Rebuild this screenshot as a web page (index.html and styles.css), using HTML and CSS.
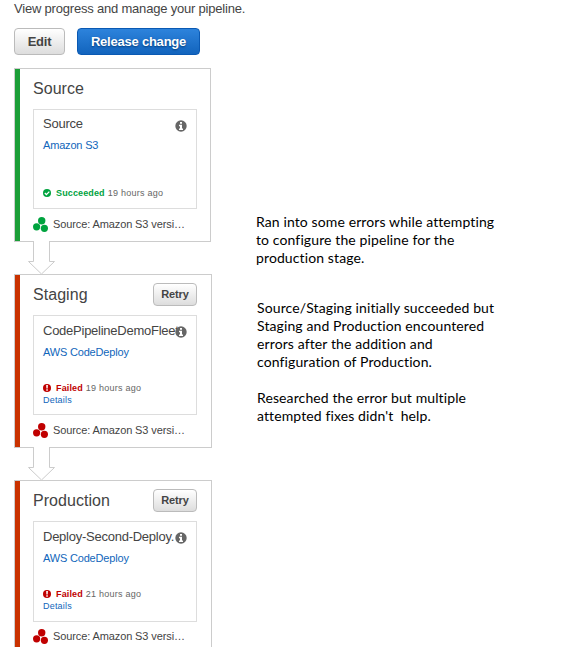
FILE: index.html
```html
<!DOCTYPE html>
<html lang="en">
<head>
<meta charset="utf-8">
<title>Pipeline</title>
<link rel="stylesheet" href="styles.css">
</head>
<body>
<svg class="defs" width="0" height="0">
  <symbol id="info" viewBox="0 0 12 12"><circle cx="6" cy="6" r="5.7" fill="#666"/><path d="M5 2h2v1.7H5zM4 4.8h3v3.7h1V10H4V8.5h1V6.2H4z" fill="#fff"/></symbol>
  <symbol id="ok" viewBox="0 0 8 8"><circle cx="4" cy="4" r="4" fill="#00a33f"/><path d="M1.8 4l1.6 1.6 2.9-3" fill="none" stroke="#fff" stroke-width="1.3"/></symbol>
  <symbol id="fail" viewBox="0 0 8 8"><circle cx="4" cy="4" r="4" fill="#c00000"/><path d="M3.2 1.1h1.7l-.2 3.4H3.4zM3.3 5.2h1.5v1.5H3.3z" fill="#fff"/></symbol>
  <symbol id="dots" viewBox="0 0 15 15"><circle cx="8.7" cy="3.7" r="3.7"/><circle cx="3.6" cy="9.8" r="3.6"/><circle cx="11.4" cy="11.3" r="3.6"/></symbol>
  <symbol id="arrow" viewBox="0 0 28 34"><path d="M5.5 0V20.5H.5L13.5 33 26.5 20.5H21.5V0" fill="#fff" stroke="#ccc"/></symbol>
</svg>
<main class="page">
  <section class="pipeline">
    <p class="intro">View progress and manage your pipeline.</p>
    <div class="actions">
      <button class="btn edit">Edit</button>
      <button class="btn primary">Release change</button>
    </div>
    <article class="stage source">
      <header class="stage-head"><h2>Source</h2></header>
      <div class="action">
        <h3>Source</h3><svg class="info"><use href="#info"/></svg>
        <a class="provider">Amazon S3</a>
        <div class="status"><svg class="state"><use href="#ok"/></svg><b class="succeeded">Succeeded</b><span>19 hours ago</span></div>
      </div>
      <div class="revision green"><svg class="dots"><use href="#dots"/></svg><span>Source: Amazon S3 versi…</span></div>
    </article>
    <svg class="arrow"><use href="#arrow"/></svg>
    <article class="stage failed">
      <header class="stage-head"><h2>Staging</h2><button class="btn retry">Retry</button></header>
      <div class="action">
        <h3>CodePipelineDemoFleet</h3><svg class="info"><use href="#info"/></svg>
        <a class="provider">AWS CodeDeploy</a>
        <div class="status"><svg class="state"><use href="#fail"/></svg><b class="error">Failed</b><span>19 hours ago</span></div>
        <a class="details">Details</a>
      </div>
      <div class="revision red"><svg class="dots"><use href="#dots"/></svg><span>Source: Amazon S3 versi…</span></div>
    </article>
    <svg class="arrow"><use href="#arrow"/></svg>
    <article class="stage failed last">
      <header class="stage-head"><h2>Production</h2><button class="btn retry">Retry</button></header>
      <div class="action">
        <h3>Deploy-Second-Deploy.</h3><svg class="info"><use href="#info"/></svg>
        <a class="provider">AWS CodeDeploy</a>
        <div class="status"><svg class="state"><use href="#fail"/></svg><b class="error">Failed</b><span>21 hours ago</span></div>
        <a class="details">Details</a>
      </div>
      <div class="revision red"><svg class="dots"><use href="#dots"/></svg><span>Source: Amazon S3 versi…</span></div>
    </article>
  </section>
  <aside class="notes">
    <p class="first">Ran into some errors while attempting<br>to configure the pipeline for the<br>production stage.</p>
    <p>Source/Staging initially succeeded but<br>Staging and Production encountered<br>errors after the addition and<br>configuration of Production.</p>
    <p>Researched the error but multiple<br>attempted fixes didn't&nbsp; help.</p>
  </aside>
</main>
</body>
</html>
```

FILE: styles.css
```css
* { box-sizing: border-box; }
body { margin: 0; background: #fff; color: #444; font: 13px/18px "Liberation Sans", Arial, sans-serif; }
h2, h3, p { margin: 0; font-weight: normal; }
svg { display: block; flex: none; }
.defs { position: absolute; }
.page { display: flex; height: 647px; overflow: hidden; }
.pipeline { width: 256px; padding-left: 14px; flex: none; }
.intro { height: 28px; white-space: nowrap; letter-spacing: -.2px; }
.actions { display: flex; gap: 12px; height: 40px; }
.btn { height: 27px; padding: 0; border: 1px solid #bbb; border-radius: 4px; background: linear-gradient(#fff, #ddd); color: #444; font: bold 13px/24px "Liberation Sans", Arial, sans-serif; letter-spacing: -.22px; white-space: nowrap; }
.edit { width: 51px; }
.primary { width: 123px; color: #fff; border-color: #0a59b3; background: linear-gradient(#2d83dc, #1264bd); text-shadow: 0 1px 2px #003b78; }
.retry { width: 44px; height: 23px; font-size: 11px; line-height: 20px; letter-spacing: -.1px; }
.stage { width: 198px; height: 174px; padding: 0 14px 0 18px; border: 1px solid #ccc; background: linear-gradient(#c93200, #c93200) left / 5px 100% no-repeat; }
.source { width: 197px; background-image: linear-gradient(#1b9e37, #1b9e37); padding-right: 13px; }
.stage-head { height: 40px; display: flex; align-items: center; justify-content: space-between; padding-bottom: 2px; }
.stage-head h2 { padding-top: 2px; font-size: 16px; line-height: 20px; letter-spacing: .05px; }
.action { position: relative; height: 100px; width: 164px; padding: 5px 9px; border: 1px solid #ddd; }
.failed .action { padding-top: 6px; }
.action h3 { font-size: 13px; line-height: 18px; letter-spacing: -.25px; white-space: nowrap; }
.info { position: absolute; right: 9.5px; top: 10px; width: 12px; height: 12px; }
.provider { display: block; margin-top: 4px; font-size: 11px; line-height: 16px; letter-spacing: -.18px; color: #1166bb; }
.status { display: flex; align-items: center; height: 12px; margin-top: 22px; font-size: 9px; line-height: 12px; letter-spacing: .25px; color: #666; white-space: nowrap; }
.source .status { margin-top: 34px; }
.state { width: 8px; height: 8px; margin-right: 5px; }
.status b { margin-right: 3px; letter-spacing: .13px; }
.succeeded { color: #00a33f; }
.error { color: #c00000; }
.details { display: block; color: #1166bb; font-size: 9px; line-height: 12px; letter-spacing: .2px; }
.revision { display: flex; align-items: center; height: 30px; font-size: 11px; letter-spacing: -.11px; white-space: nowrap; }
.dots { width: 15px; height: 15px; margin-right: 5px; }
.green { fill: #00a33f; }
.red { fill: #c00000; }
.arrow { position: relative; width: 28px; height: 34px; margin: -1px 0 -1px 14px; }
.last { height: 175px; }
.last .action { height: 101px; }
.last .revision { height: 28px; }
.notes { padding-top: 213px; color: #000; font: 14px/18px Lato, Carlito, sans-serif; letter-spacing: .11px; white-space: nowrap; }
.notes p { margin: 0 0 18px 1px; }
.notes .first { margin: 0 0 32px; }
```
